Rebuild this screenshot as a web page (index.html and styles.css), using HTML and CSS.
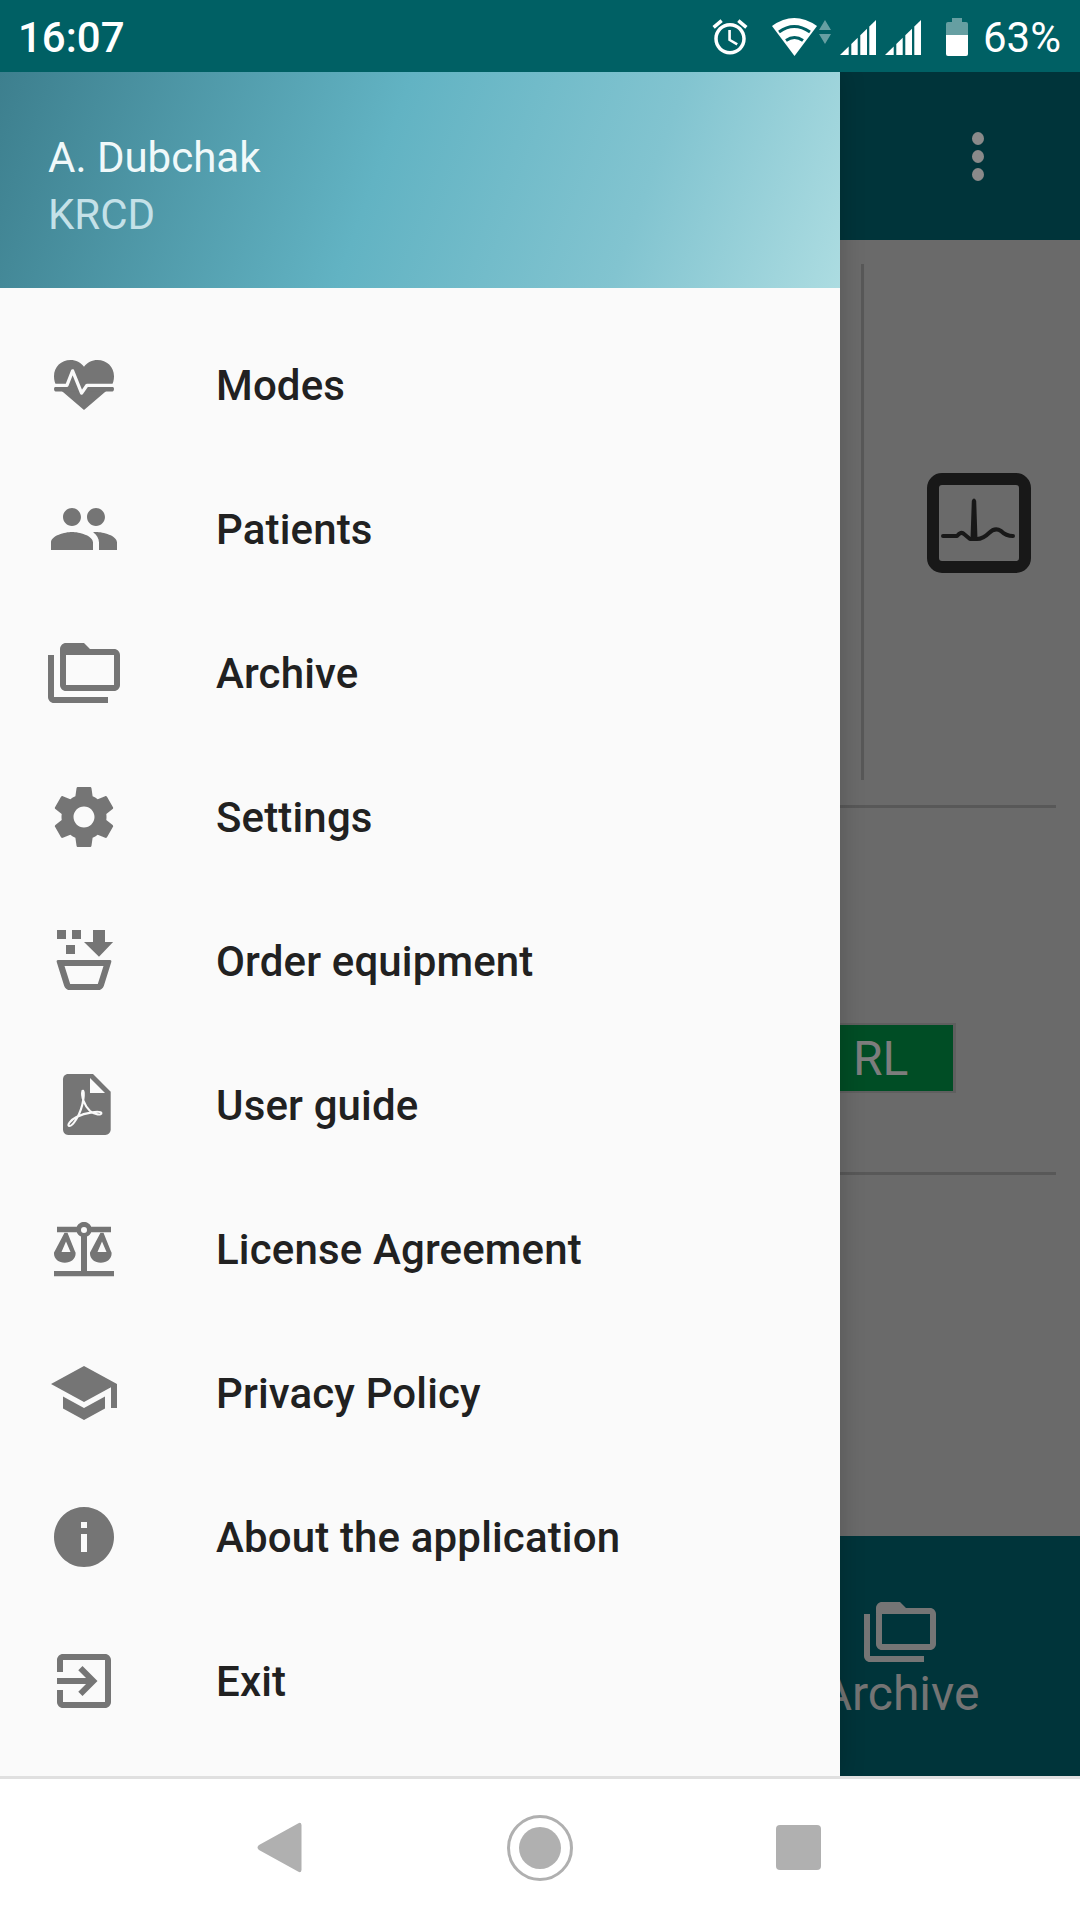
FILE: index.html
```html
<!DOCTYPE html>
<html lang="en">
<head>
<meta charset="utf-8">
<title>Drawer</title>
<link rel="stylesheet" href="styles.css">
</head>
<body>
<svg class="defs" width="0" height="0" aria-hidden="true">
  <symbol id="signal" viewBox="0 0 36 35">
    <polygon points="0,35 8.700,26.500 8.700,35"/>
    <polygon points="11.300,35 11.300,24 17.700,17.800 17.700,35"/>
    <polygon points="20.300,35 20.300,15.300 27,8.800 27,35"/>
    <polygon points="29.300,35 29.300,6.500 36,0 36,35"/>
  </symbol>
  <symbol id="folders" viewBox="0 0 24 24">
    <path fill-rule="evenodd" d="M2 6H0v5h.01L0 20c0 1.1.9 2 2 2h18v-2H2V6zm20-2h-8l-2-2H6c-1.1 0-1.99.9-1.99 2L4 16c0 1.1.9 2 2 2h16c1.1 0 2-.9 2-2V6c0-1.1-.9-2-2-2zm0 12H6V6h16v10z"/>
  </symbol>
</svg>

<div class="phone">
  <header class="status">
    <span class="time">16:07</span>
    <div class="status-icons">
      <svg class="ic-alarm" viewBox="0 0 24 24"><path d="M22 5.72l-4.6-3.86-1.29 1.53 4.6 3.86L22 5.72zM7.88 3.39L6.6 1.86 2 5.71l1.29 1.53 4.59-3.85zM12.5 8H11v6l4.75 2.85.75-1.23-4-2.37V8zM12 4c-4.97 0-9 4.03-9 9s4.02 9 9 9c4.97 0 9-4.03 9-9s-4.03-9-9-9zm0 16c-3.87 0-7-3.13-7-7s3.13-7 7-7 7 3.13 7 7-3.13 7-7 7z"/></svg>
      <svg class="ic-wifi" viewBox="0 0 59 38">
        <path d="M0 8Q22-8 45 8L22.500 38Z"/>
        <path class="wifi-gap" d="M7 14Q22 3 38 14M14 22.500Q22.500 16.500 31 22.500"/>
        <path class="wifi-dim" d="M53 2L59 12H47ZM47 16H59L53 26Z"/>
      </svg>
      <svg class="ic-signal"><use href="#signal"/></svg>
      <svg class="ic-signal ic-signal-b"><use href="#signal"/></svg>
      <svg class="ic-battery" viewBox="0 0 22 38">
        <path class="batt-dim" d="M6 0H16V4H20Q22 4 22 6V17H0V6Q0 4 2 4H6Z"/>
        <path d="M0 17H22V36Q22 38 20 38H2Q0 38 0 36Z"/>
      </svg>
      <span class="battery-text">63%</span>
    </div>
  </header>

  <div class="middle">
    <aside class="drawer">
      <div class="drawer-head">
        <div class="user-name">A. Dubchak</div>
        <div class="user-org">KRCD</div>
      </div>
      <nav class="menu">
        <div class="item">
          <svg class="item-ic" viewBox="0 0 24 24">
            <path d="M7.500 3.700C9.300 3.700 11 4.600 12 5.900 13 4.600 14.700 3.700 16.500 3.700 19.600 3.700 22 6 22 9.100 22 10.300 21.700 11.400 21.200 12.400L21 14 19.400 14 12 20.300 4.600 14 3 14 2.800 12.400C2.300 11.400 2 10.300 2 9.100 2 6 4.400 3.700 7.500 3.700Z"/>
            <rect x="2" y="12.500" width="20" height="1.700" rx=".85"/>
            <path class="heart-pulse" d="M2 12.100H6.300L8.200 7.300 11.200 14.700 13 12.100H22"/>
          </svg>
          <span class="item-text">Modes</span>
        </div>
        <div class="item">
          <svg class="item-ic" viewBox="0 0 24 24"><path d="M16 11c1.660 0 2.990-1.340 2.990-3S17.660 5 16 5c-1.660 0-3 1.340-3 3s1.340 3 3 3zm-8 0c1.660 0 2.990-1.340 2.990-3S9.660 5 8 5C6.340 5 5 6.340 5 8s1.340 3 3 3zm0 2c-2.330 0-7 1.170-7 3.500V19h14v-2.500c0-2.330-4.670-3.500-7-3.500zm8 0c-.290 0-.620.020-.970.050 1.160.840 1.970 1.970 1.970 3.450V19h6v-2.500c0-2.330-4.670-3.500-7-3.500z"/></svg>
          <span class="item-text">Patients</span>
        </div>
        <div class="item">
          <svg class="item-ic"><use href="#folders"/></svg>
          <span class="item-text">Archive</span>
        </div>
        <div class="item">
          <svg class="item-ic" viewBox="0 0 24 24"><path d="M19.430 12.980c.040-.320.070-.640.070-.980s-.030-.660-.070-.980l2.110-1.650c.190-.150.240-.420.120-.640l-2-3.460c-.120-.220-.390-.300-.610-.220l-2.490 1c-.520-.400-1.080-.730-1.690-.980l-.380-2.650C14.460 2.180 14.250 2 14 2h-4c-.250 0-.460.180-.490.420l-.380 2.650c-.610.250-1.170.590-1.690.980l-2.490-1c-.230-.090-.490 0-.610.220l-2 3.460c-.130.220-.070.490.120.640l2.110 1.650c-.040.320-.070.650-.070.980s.030.660.070.980l-2.110 1.650c-.190.150-.240.420-.120.640l2 3.460c.120.220.390.300.610.220l2.490-1c.520.400 1.080.730 1.690.980l.380 2.650c.030.240.240.420.490.420h4c.250 0 .460-.180.490-.420l.380-2.650c.610-.250 1.170-.590 1.690-.980l2.490 1c.230.090.490 0 .610-.220l2-3.460c.120-.220.070-.490-.120-.640l-2.110-1.650zM12 15.500c-1.930 0-3.500-1.570-3.500-3.500s1.570-3.500 3.500-3.500 3.500 1.570 3.500 3.500-1.570 3.500-3.500 3.500z"/></svg>
          <span class="item-text">Settings</span>
        </div>
        <div class="item">
          <svg class="item-ic" viewBox="0 0 24 24">
            <path d="M3 1.700H6V4.700H3ZM8 1.700H11V4.700H8ZM6 6.700H9V9.700H6ZM15 1.700H19V5.700H21.700L17 10.600 12 5.700H15Z"/>
            <path fill-rule="evenodd" d="M3.300 11.700H20.700C21 11.700 21.200 12 21.100 12.300L18.600 20.300C18.300 21.200 17.500 21.700 16.700 21.700H7.300C6.500 21.700 5.700 21.200 5.400 20.300L2.900 12.300C2.800 12 3 11.700 3.300 11.700ZM5.500 13.700L7.400 19.700H16.600L18.500 13.700Z"/>
          </svg>
          <span class="item-text">Order equipment</span>
        </div>
        <div class="item">
          <svg class="item-ic" viewBox="0 0 24 24">
            <path d="M6.700 1.700H15L20.900 7.600V20.200C20.900 21.200 20.100 22 19.100 22H6.700C5.700 22 5 21.200 5 20.200V3.500C5 2.500 5.700 1.700 6.700 1.700Z"/>
            <path class="pdf-fold" d="M14 3V8H19Z"/>
            <path class="pdf-mark" d="M11.500 7.300C11 9 12 12 14 14 15.500 15.300 18 15.500 17.800 14.700 17.500 13.800 12.500 14.500 9.500 16 7.500 17 6.300 18.800 7 19 8 19.300 11 15.500 11.800 10 12 8.500 12 7 11.500 7.300Z"/>
          </svg>
          <span class="item-text">User guide</span>
        </div>
        <div class="item">
          <svg class="item-ic" viewBox="0 0 24 24">
            <path fill-rule="evenodd" d="M3 4.600H9.600C9.900 3.700 10.900 3 12 3S14.100 3.700 14.400 4.600H21V6.400H14.400C14.200 7 13.700 7.500 13 7.800V19.300H22V21.100H2V19.300H11V7.800C10.300 7.500 9.800 7 9.600 6.400H3ZM12 4.700A1 1 0 1 0 12 6.700 1 1 0 1 0 12 4.700Z"/>
            <path fill-rule="evenodd" d="M5.500 6.600H6.500L9 12.800C9.200 13 9.200 13.300 9.200 13.600 9.200 15.300 7.600 16.600 5.600 16.600S2 15.300 2 13.600C2 13.300 2 13 2.200 12.800ZM6 9.500L4.500 13H7.500ZM17.500 6.600H18.500L21 12.800C21.200 13 21.200 13.300 21.200 13.600 21.200 15.300 19.600 16.600 17.600 16.600S14 15.300 14 13.600C14 13.300 14 13 14.200 12.800ZM18 9.500L16.500 13H19.500Z"/>
          </svg>
          <span class="item-text">License Agreement</span>
        </div>
        <div class="item">
          <svg class="item-ic" viewBox="0 0 24 24"><path d="M5 13.180v4L12 21l7-3.820v-4L12 17l-7-3.820zM12 3L1 9l11 6 9-4.910V17h2V9L12 3z"/></svg>
          <span class="item-text">Privacy Policy</span>
        </div>
        <div class="item">
          <svg class="item-ic" viewBox="0 0 24 24"><path d="M12 2C6.480 2 2 6.480 2 12s4.480 10 10 10 10-4.480 10-10S17.520 2 12 2zm1 15h-2v-6h2v6zm0-8h-2V7h2v2z"/></svg>
          <span class="item-text">About the application</span>
        </div>
        <div class="item">
          <svg class="item-ic" viewBox="0 0 24 24"><path d="M10.090 15.590L11.500 17l5-5-5-5-1.410 1.410L12.670 11H3v2h9.670l-2.580 2.590zM19 3H5c-1.110 0-2 .900-2 2v4h2V5h14v14H5v-4H3v4c0 1.100.890 2 2 2h14c1.100 0 2-.900 2-2V5c0-1.100-.900-2-2-2z"/></svg>
          <span class="item-text">Exit</span>
        </div>
      </nav>
    </aside>

    <section class="behind">
      <div class="appbar">
        <div class="dots"><i class="dot"></i><i class="dot"></i><i class="dot"></i></div>
      </div>
      <div class="body">
        <div class="top-row">
          <div class="vline"></div>
          <svg class="ecg" viewBox="0 0 104 100">
            <rect class="ecg-frame" x="6" y="6" width="92" height="88" rx="9"/>
            <path class="ecg-wave" d="M16 63H30Q34 58 37 61L43 66H50Q56 66 62 60 68 54 74 58 79 63 86 63"/>
            <path class="ecg-spike" d="M44.500 66L45.800 28Q47 25 48.200 28L49.500 66Z"/>
          </svg>
        </div>
        <div class="hline hline-a"></div>
        <div class="badge"><span class="badge-text">RL</span></div>
        <div class="hline hline-b"></div>
      </div>
      <div class="tabbar">
        <div class="tab">
          <svg class="tab-ic"><use href="#folders"/></svg>
          <span class="tab-text">Archive</span>
        </div>
      </div>
    </section>
  </div>

  <footer class="navbar">
    <svg class="nav-back" viewBox="0 0 45 51"><path d="M41 1.500Q44 -.5 44.500 3V48Q44 51.500 41 49.500L2 28Q-1 25.500 2 23Z"/></svg>
    <svg class="nav-home" viewBox="0 0 66 66"><circle class="home-ring" cx="33" cy="33" r="31.500"/><circle cx="33" cy="33" r="21"/></svg>
    <div class="nav-square"></div>
  </footer>
</div>
</body>
</html>
```

FILE: styles.css
```css
* { box-sizing: border-box; }
html, body { margin: 0; padding: 0; }
body { width: 1080px; height: 1920px; font-family: Roboto, "Liberation Sans", sans-serif; background: #fff; overflow: hidden; }
.defs { display: block; height: 0; }
.phone { display: flex; flex-direction: column; width: 1080px; height: 1920px; }

.status { flex: 0 0 72px; display: flex; justify-content: space-between; align-items: center; padding: 4px 19px 0 18px; background: #006064; color: #fff; position: relative; z-index: 2; }
.time { font-size: 42px; font-weight: 500; line-height: 48px; }
.status-icons { display: flex; align-items: center; fill: #fff; }
.status-icons svg { margin-bottom: 2px; }
.ic-alarm { width: 42px; height: 42px; }
.ic-wifi { width: 59px; height: 38px; margin-left: 21px; }
.wifi-gap { fill: none; stroke: #006064; stroke-width: 3; }
.wifi-dim { opacity: .4; }
.ic-signal { width: 36px; height: 35px; margin-left: 9px; }
.ic-signal-b { margin-left: 9px; }
.ic-battery { width: 22px; height: 38px; margin-left: 25px; }
.batt-dim { opacity: .4; }
.battery-text { font-size: 42px; line-height: 48px; margin-left: 15px; }

.middle { flex: 1; display: flex; min-height: 0; }
.drawer { flex: 0 0 840px; background: #fafafa; display: flex; flex-direction: column; position: relative; z-index: 1; box-shadow: 0 0 24px rgba(0,0,0,.2); }
.drawer-head { height: 216px; padding: 58px 0 0 48px; background: linear-gradient(110deg, #3d7f8e 0%, #62b3c3 45%, #82c4d0 75%, #acdce1 100%); }
.user-name { font-size: 42px; line-height: 56px; color: #f0f9fa; }
.user-org { font-size: 42px; line-height: 58px; color: #c4e1e8; }
.menu { padding-top: 25px; }
.item { display: flex; align-items: center; height: 144px; padding-left: 48px; }
.item-ic { flex: 0 0 72px; width: 72px; height: 72px; fill: #757575; }
.item-text { margin-left: 96px; font-size: 42px; font-weight: 500; letter-spacing: .15px; color: #212121; }
.heart-pulse { fill: none; stroke: #fafafa; stroke-width: 1.1; stroke-linejoin: round; }
.pdf-fold { fill: #fafafa; }
.pdf-mark { fill: none; stroke: #fafafa; stroke-width: .7; }

.behind { flex: 1; display: flex; flex-direction: column; overflow: hidden; min-width: 0; }
.appbar { flex: 0 0 168px; display: flex; align-items: center; padding-left: 132px; background: #00343a; }
.dots { display: flex; flex-direction: column; gap: 5px; }
.dot { display: block; width: 12px; height: 13px; border-radius: 50%; background: #8a8a8a; }
.body { flex: 1; padding-top: 24px; background: #6a6a6a; }
.top-row { display: flex; height: 516px; padding-left: 21px; }
.vline { width: 3px; background: #585858; }
.ecg { width: 104px; height: 100px; margin: 209px 0 0 63px; }
.ecg-frame { fill: none; stroke: #181818; stroke-width: 12; }
.ecg-wave { fill: none; stroke: #181818; stroke-width: 4; stroke-linecap: round; stroke-linejoin: round; }
.ecg-spike { fill: #181818; stroke: #181818; stroke-width: 2; stroke-linejoin: round; }
.hline { width: 216px; height: 3px; background: #585858; }
.hline-a { margin-top: 25px; }
.hline-b { margin-top: 79px; }
.badge { display: flex; align-items: center; width: 116px; height: 70px; margin-top: 215px; padding-left: 13px; background: #004d25; border: solid #5f5f5f; border-width: 2px 3px 2px 0; }
.badge-text { font-size: 48px; color: #7d7d7d; }
.tabbar { flex: 0 0 240px; background: #00343a; }
.tab { display: flex; flex-direction: column; align-items: center; width: 120px; padding-top: 60px; }
.tab-ic { flex: 0 0 72px; width: 72px; height: 72px; fill: #757575; }
.tab-text { font-size: 48px; line-height: 52px; color: #747474; white-space: nowrap; }

.navbar { flex: 0 0 144px; display: flex; align-items: center; padding: 0 259px 4px 257px; justify-content: space-between; background: #fff; border-top: 3px solid #e0e0e0; position: relative; z-index: 2; }
.nav-back { width: 45px; height: 51px; fill: #b0b0b0; }
.nav-home { width: 66px; height: 66px; margin-left: 2px; fill: #b0b0b0; }
.home-ring { fill: none; stroke: #b0b0b0; stroke-width: 3; }
.nav-square { width: 45px; height: 45px; border-radius: 4px; background: #b0b0b0; }
```
